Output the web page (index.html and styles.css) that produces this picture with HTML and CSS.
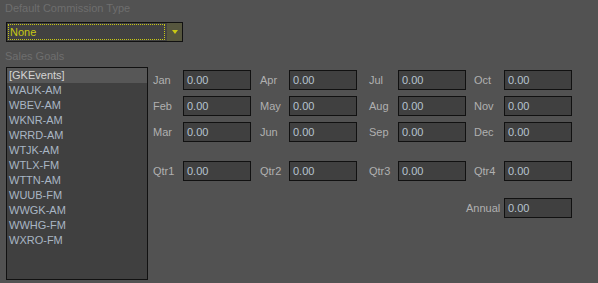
FILE: index.html
```html
<!DOCTYPE html>
<html lang="en">
<head>
    <meta charset="UTF-8">
    <title>Sales Goals</title>
    <link rel="stylesheet" href="styles.css">
</head>
<body>

<div class="caption">Default Commission Type</div>
<div class="combo">
    <div class="combo-text"><span>None</span></div>
    <div class="combo-btn"><span class="tri"></span></div>
</div>

<div class="caption caption-goals">Sales Goals</div>
<div class="goals">
    <div class="list">
        <div class="item selected">[GKEvents]</div>
        <div class="item">WAUK-AM</div>
        <div class="item">WBEV-AM</div>
        <div class="item">WKNR-AM</div>
        <div class="item">WRRD-AM</div>
        <div class="item">WTJK-AM</div>
        <div class="item">WTLX-FM</div>
        <div class="item">WTTN-AM</div>
        <div class="item">WUUB-FM</div>
        <div class="item">WWGK-AM</div>
        <div class="item">WWHG-FM</div>
        <div class="item">WXRO-FM</div>
    </div>

    <div class="months">
        <div class="lbl">Jan</div><div class="box">0.00</div>
        <div class="lbl c2">Apr</div><div class="box">0.00</div>
        <div class="lbl c3">Jul</div><div class="box">0.00</div>
        <div class="lbl c4">Oct</div><div class="box">0.00</div>

        <div class="lbl">Feb</div><div class="box">0.00</div>
        <div class="lbl c2">May</div><div class="box">0.00</div>
        <div class="lbl c3">Aug</div><div class="box">0.00</div>
        <div class="lbl c4">Nov</div><div class="box">0.00</div>

        <div class="lbl">Mar</div><div class="box">0.00</div>
        <div class="lbl c2">Jun</div><div class="box">0.00</div>
        <div class="lbl c3">Sep</div><div class="box">0.00</div>
        <div class="lbl c4">Dec</div><div class="box">0.00</div>

        <div class="lbl">Qtr1</div><div class="box">0.00</div>
        <div class="lbl c2">Qtr2</div><div class="box">0.00</div>
        <div class="lbl c3">Qtr3</div><div class="box">0.00</div>
        <div class="lbl c4">Qtr4</div><div class="box">0.00</div>

        <div class="lbl annual">Annual</div><div class="box annual-box">0.00</div>
    </div>
</div>

</body>
</html>
```

FILE: styles.css
```css
body { margin: 0; padding: 2px 0 0 0; background-color: #525252; font-family: "Liberation Sans", Arial, sans-serif; font-size: 11px; }
.caption { color: #6e6e6e; height: 13px; line-height: 13px; padding-left: 5px; }
.caption-goals { margin-top: 8px; }
.combo { display: flex; margin: 7px 0 0 6px; width: 175px; height: 18px; border: 1px solid #111111; background-color: #414141; }
.combo-text { flex: 1; padding: 1px 2px 1px 1px; }
.combo-text span { display: block; height: 14px; line-height: 14px; border: 1px dotted #c8c814; color: #c8c814; padding-left: 1px; }
.combo-btn { width: 15px; background-color: #56563e; display: flex; align-items: center; justify-content: center; }
.tri { width: 0; height: 0; border-left: 3px solid transparent; border-right: 3px solid transparent; border-top: 4px solid #c8c814; }
.goals { display: flex; margin-top: 4px; }
.list { width: 140px; height: 211px; margin-left: 6px; border: 1px solid #111111; background-color: #404040; }
.item { height: 15px; line-height: 15px; padding-left: 2px; color: #a9b6c4; }
.selected { background-color: #575757; color: #d4d4d4; }
.months { display: grid; grid-template-columns: 30px 68px 38px 68px 41px 68px 38px 68px; grid-template-rows: 26px 26px 39px 37px 20px; margin: 3px 0 0 5px; }
.lbl { height: 20px; line-height: 20px; color: #b0b0b0; white-space: nowrap; }
.c2 { padding-left: 9px; }
.c3 { padding-left: 12px; }
.c4 { padding-left: 8px; }
.box { height: 18px; border: 1px solid #111111; background-color: #404040; color: #b7c3cf; line-height: 18px; padding-left: 3px; }
.annual { grid-column: 7; grid-row: 5; text-align: right; padding-right: 5px; }
.annual-box { grid-column: 8; grid-row: 5; }
```
